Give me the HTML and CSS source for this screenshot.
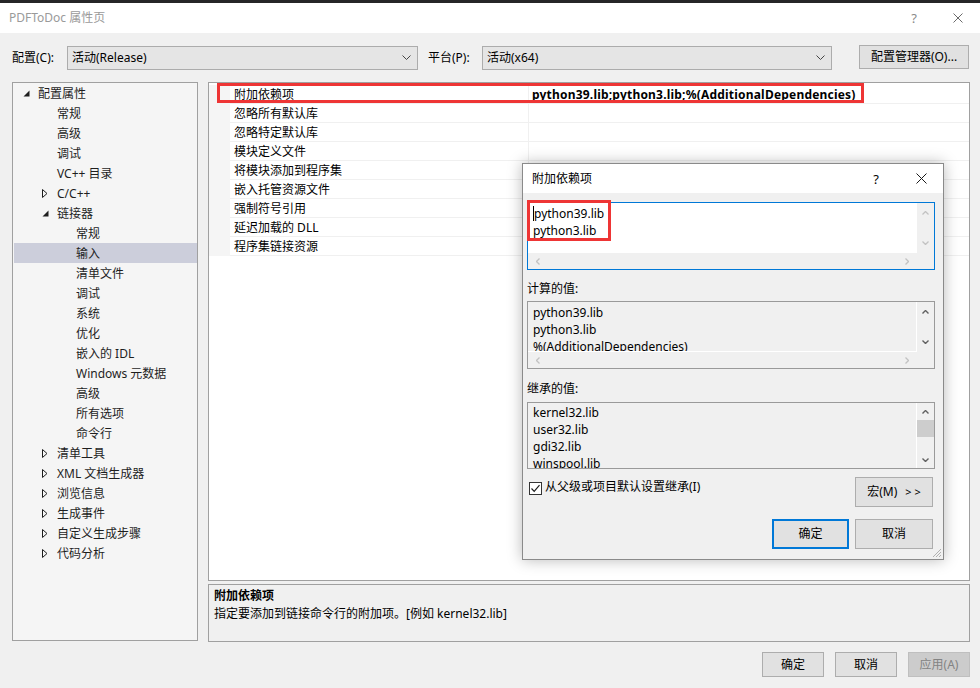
FILE: index.html
```html
<!DOCTYPE html>
<html lang="zh-CN">
<head>
<meta charset="utf-8">
<title>PDFToDoc 属性页</title>
<link rel="stylesheet" href="styles.css">
</head>
<body>
<div class="window">
  <div class="strip"></div>
  <div class="titlebar">
    <span class="title">PDFToDoc 属性页</span>
    <span class="tb-help">?</span>
    <span class="tb-close"><svg width="10" height="10" viewBox="0 0 10 10"><path d="M0.5 0.5 L9.5 9.5 M9.5 0.5 L0.5 9.5" stroke="#6a6a6a" stroke-width="1"/></svg></span>
  </div>

  <div class="toolbar">
    <span class="lbl">配置(C):</span>
    <div class="combo c1"><span>活动(Release)</span><svg width="9" height="5" viewBox="0 0 9 5"><path d="M0.5 0.5 L4.5 4.5 L8.5 0.5" fill="none" stroke="#444"/></svg></div>
    <span class="lbl lbl2">平台(P):</span>
    <div class="combo c2"><span>活动(x64)</span><svg width="9" height="5" viewBox="0 0 9 5"><path d="M0.5 0.5 L4.5 4.5 L8.5 0.5" fill="none" stroke="#444"/></svg></div>
    <button class="btn mgr">配置管理器(O)...</button>
  </div>

  <div class="main">
    <div class="tree">
      <div class="node l0"><span class="tw"><svg width="7" height="7" viewBox="0 0 7 7"><polygon points="6.5,0.5 6.5,6.5 0.5,6.5" fill="#1e1e1e"/></svg></span>配置属性</div>
      <div class="node l1"><span class="tw"></span>常规</div>
      <div class="node l1"><span class="tw"></span>高级</div>
      <div class="node l1"><span class="tw"></span>调试</div>
      <div class="node l1"><span class="tw"></span>VC++ 目录</div>
      <div class="node l1"><span class="tw"><svg width="6" height="9" viewBox="0 0 6 9"><polygon points="0.5,0.5 5,4.5 0.5,8.5" fill="none" stroke="#1e1e1e"/></svg></span>C/C++</div>
      <div class="node l1"><span class="tw"><svg width="7" height="7" viewBox="0 0 7 7"><polygon points="6.5,0.5 6.5,6.5 0.5,6.5" fill="#1e1e1e"/></svg></span>链接器</div>
      <div class="node l2"><span class="tw"></span>常规</div>
      <div class="node l2 sel"><span class="tw"></span>输入</div>
      <div class="node l2"><span class="tw"></span>清单文件</div>
      <div class="node l2"><span class="tw"></span>调试</div>
      <div class="node l2"><span class="tw"></span>系统</div>
      <div class="node l2"><span class="tw"></span>优化</div>
      <div class="node l2"><span class="tw"></span>嵌入的 IDL</div>
      <div class="node l2"><span class="tw"></span>Windows 元数据</div>
      <div class="node l2"><span class="tw"></span>高级</div>
      <div class="node l2"><span class="tw"></span>所有选项</div>
      <div class="node l2"><span class="tw"></span>命令行</div>
      <div class="node l1"><span class="tw"><svg width="6" height="9" viewBox="0 0 6 9"><polygon points="0.5,0.5 5,4.5 0.5,8.5" fill="none" stroke="#1e1e1e"/></svg></span>清单工具</div>
      <div class="node l1"><span class="tw"><svg width="6" height="9" viewBox="0 0 6 9"><polygon points="0.5,0.5 5,4.5 0.5,8.5" fill="none" stroke="#1e1e1e"/></svg></span>XML 文档生成器</div>
      <div class="node l1"><span class="tw"><svg width="6" height="9" viewBox="0 0 6 9"><polygon points="0.5,0.5 5,4.5 0.5,8.5" fill="none" stroke="#1e1e1e"/></svg></span>浏览信息</div>
      <div class="node l1"><span class="tw"><svg width="6" height="9" viewBox="0 0 6 9"><polygon points="0.5,0.5 5,4.5 0.5,8.5" fill="none" stroke="#1e1e1e"/></svg></span>生成事件</div>
      <div class="node l1"><span class="tw"><svg width="6" height="9" viewBox="0 0 6 9"><polygon points="0.5,0.5 5,4.5 0.5,8.5" fill="none" stroke="#1e1e1e"/></svg></span>自定义生成步骤</div>
      <div class="node l1"><span class="tw"><svg width="6" height="9" viewBox="0 0 6 9"><polygon points="0.5,0.5 5,4.5 0.5,8.5" fill="none" stroke="#1e1e1e"/></svg></span>代码分析</div>
    </div>

    <div class="right">
      <div class="grid">
        <div class="row"><div class="gut"></div><div class="name">附加依赖项</div><div class="val bold">python39.lib;python3.lib;%(AdditionalDependencies)</div></div>
        <div class="row"><div class="gut"></div><div class="name">忽略所有默认库</div><div class="val"></div></div>
        <div class="row"><div class="gut"></div><div class="name">忽略特定默认库</div><div class="val"></div></div>
        <div class="row"><div class="gut"></div><div class="name">模块定义文件</div><div class="val"></div></div>
        <div class="row"><div class="gut"></div><div class="name">将模块添加到程序集</div><div class="val"></div></div>
        <div class="row"><div class="gut"></div><div class="name">嵌入托管资源文件</div><div class="val"></div></div>
        <div class="row"><div class="gut"></div><div class="name">强制符号引用</div><div class="val"></div></div>
        <div class="row"><div class="gut"></div><div class="name">延迟加载的 DLL</div><div class="val"></div></div>
        <div class="row"><div class="gut"></div><div class="name">程序集链接资源</div><div class="val"></div></div>
        <div class="redmark"></div>
      </div>
      <div class="desc">
        <div class="desc-title">附加依赖项</div>
        <div>指定要添加到链接命令行的附加项。[例如 kernel32.lib]</div>
      </div>
    </div>
  </div>

  <div class="footer">
    <button class="btn fbtn">确定</button>
    <button class="btn fbtn">取消</button>
    <button class="btn fbtn disabled">应用(A)</button>
  </div>

  <div class="dialog">
    <div class="dlg-title">
      <span class="dlg-name">附加依赖项</span>
      <span class="dlg-help">?</span>
      <span class="dlg-close"><svg width="11" height="11" viewBox="0 0 11 11"><path d="M0.5 0.5 L10.5 10.5 M10.5 0.5 L0.5 10.5" stroke="#1a1a1a" stroke-width="1"/></svg></span>
    </div>
    <div class="dlg-body">
      <div class="lbox edit">
        <div class="ltext"><span class="caret"></span>python39.lib<br>python3.lib</div>
        <div class="vs">
          <span class="cell c20"><svg width="7" height="4" viewBox="0 0 7 4"><path d="M0.5 3.5 L3.5 0.5 L6.5 3.5" fill="none" stroke="#c2c2c2" stroke-width="1.3"/></svg></span>
          <span class="cell c20"><svg width="7" height="4" viewBox="0 0 7 4"><path d="M0.5 0.5 L3.5 3.5 L6.5 0.5" fill="none" stroke="#c2c2c2" stroke-width="1.3"/></svg></span>
        </div>
        <div class="hs">
          <span class="hcell"><svg width="4" height="7" viewBox="0 0 4 7"><path d="M3.5 0.5 L0.5 3.5 L3.5 6.5" fill="none" stroke="#c2c2c2" stroke-width="1.3"/></svg></span>
          <span class="hcell"><svg width="4" height="7" viewBox="0 0 4 7"><path d="M0.5 0.5 L3.5 3.5 L0.5 6.5" fill="none" stroke="#c2c2c2" stroke-width="1.3"/></svg></span>
        </div>
        <div class="corner"></div>
      </div>

      <div class="dlg-lbl lbl-a">计算的值:</div>
      <div class="lbox ro ro2">
        <div class="ltext">python39.lib<br>python3.lib<br>%(AdditionalDependencies)</div>
        <div class="vs">
          <span class="cell c20"><svg width="7" height="4" viewBox="0 0 7 4"><path d="M0.5 3.5 L3.5 0.5 L6.5 3.5" fill="none" stroke="#606060" stroke-width="1.4"/></svg></span>
          <span class="cell c20"><svg width="7" height="4" viewBox="0 0 7 4"><path d="M0.5 0.5 L3.5 3.5 L6.5 0.5" fill="none" stroke="#606060" stroke-width="1.4"/></svg></span>
        </div>
        <div class="hs">
          <span class="hcell"><svg width="4" height="7" viewBox="0 0 4 7"><path d="M3.5 0.5 L0.5 3.5 L3.5 6.5" fill="none" stroke="#c2c2c2" stroke-width="1.3"/></svg></span>
          <span class="hcell"><svg width="4" height="7" viewBox="0 0 4 7"><path d="M0.5 0.5 L3.5 3.5 L0.5 6.5" fill="none" stroke="#c2c2c2" stroke-width="1.3"/></svg></span>
        </div>
        <div class="corner"></div>
      </div>

      <div class="dlg-lbl lbl-b">继承的值:</div>
      <div class="lbox ro ro3">
        <div class="ltext">kernel32.lib<br>user32.lib<br>gdi32.lib<br>winspool.lib</div>
        <div class="vs vs3">
          <span class="cell c17"><svg width="7" height="4" viewBox="0 0 7 4"><path d="M0.5 3.5 L3.5 0.5 L6.5 3.5" fill="none" stroke="#606060" stroke-width="1.4"/></svg></span>
          <span class="thumb"></span>
          <span class="spacer"></span>
          <span class="cell c17"><svg width="7" height="4" viewBox="0 0 7 4"><path d="M0.5 0.5 L3.5 3.5 L6.5 0.5" fill="none" stroke="#606060" stroke-width="1.4"/></svg></span>
        </div>
      </div>

      <div class="chkrow">
        <span class="chk"><svg width="11" height="11" viewBox="0 0 11 11"><path d="M1.5 5.5 L4.2 8.3 L9.5 2.2" fill="none" stroke="#1a1a1a" stroke-width="1.2"/></svg></span>
        <span class="chklbl">从父级或项目默认设置继承(I)</span>
        <button class="btn dbtn macro">宏(M) <span class="gt">&gt;&gt;</span></button>
      </div>
      <div class="btnrow">
        <button class="btn dbtn primary">确定</button>
        <button class="btn dbtn">取消</button>
      </div>
    </div>
    <div class="redmark2"></div>
    <svg class="grip" width="10" height="10" viewBox="0 0 10 10"><path d="M9 1 L1 9 M9 4 L4 9 M9 7 L7 9" stroke="#b0b0b0" stroke-width="1"/></svg>
  </div>
</div>
</body>
</html>
```

FILE: styles.css
```css
* { box-sizing: border-box; }
html, body { margin: 0; padding: 0; }
body {
  width: 980px;
  height: 688px;
  overflow: hidden;
  background: #f0f0f0;
  font-family: "Noto Sans", "Noto Sans CJK SC", sans-serif;
  font-size: 12px;
  line-height: 16px;
  color: #000;
}
.window {
  position: relative;
  width: 980px;
  height: 688px;
  display: flex;
  flex-direction: column;
}
.strip { height: 3px; background: #262627; flex: none; }
.titlebar {
  height: 30px;
  background: #fff;
  display: flex;
  align-items: center;
  padding-left: 9px;
  flex: none;
}
.title { color: #9a9a9a; flex: 1; }
.tb-help { color: #8a8a8a; font-size: 13px; margin-right: 36px; }
.tb-close { width: 10px; height: 10px; display: flex; margin-right: 17px; }

.toolbar {
  height: 49px;
  display: flex;
  align-items: center;
  padding-left: 12px;
  flex: none;
}
.lbl { width: 55px; flex: none; }
.lbl2 { margin-left: 10px; width: 54px; }
.combo {
  height: 24px;
  background: #e5e5e5;
  border: 1px solid #acacac;
  display: flex;
  align-items: center;
  justify-content: space-between;
  padding: 0 6px 0 4px;
  flex: none;
}
.c1 { width: 351px; }
.c2 { width: 350px; }
.btn {
  font: inherit;
  line-height: 16px;
  background: #e1e1e1;
  border: 1px solid #adadad;
  color: #000;
  padding: 0;
  display: flex;
  align-items: center;
  justify-content: center;
  flex: none;
}
.mgr { margin-left: 27px; width: 110px; height: 24px; margin-top: -2px; }

.main {
  height: 560px;
  display: flex;
  gap: 10px;
  padding: 0 10px 0 12px;
  flex: none;
}
.tree {
  width: 186px;
  height: 559px;
  background: #f5f5f5;
  border: 1px solid #a0a0a0;
  padding-left: 1px;
  flex: none;
}
.node {
  height: 20px;
  padding-top: 1px;
  display: flex;
  align-items: center;
  color: #1e1e1e;
  white-space: nowrap;
}
.l0 { padding-left: 9px; }
.l1 { padding-left: 28px; }
.l2 { padding-left: 47px; }
.tw { width: 15px; display: flex; align-items: center; flex: none; margin-top: -1px; }
.sel { background: #cccedb; }

.right { width: 762px; display: flex; flex-direction: column; flex: none; }
.grid {
  position: relative;
  height: 499px;
  background: #fff;
  border: 1px solid #a0a0a0;
  padding-top: 2px;
  flex: none;
}
.row { height: 19px; display: flex; }
.gut { width: 21px; background: #f5f5f5; flex: none; }
.name {
  width: 298px;
  padding: 1px 0 0 4px;
  border-bottom: 1px solid #f0f0f0;
  line-height: 17px;
  flex: none;
  white-space: nowrap;
}
.val {
  flex: 1;
  border-left: 1px solid #f0f0f0;
  border-bottom: 1px solid #f0f0f0;
  padding: 1px 0 0 3px;
  line-height: 17px;
  white-space: nowrap;
}
.bold { font-weight: 700; letter-spacing: 0.2px; }
.redmark {
  position: absolute;
  left: 8px;
  top: 0;
  width: 647px;
  height: 20px;
  border: 3px solid #ee3535;
}
.desc {
  margin-top: 3px;
  height: 58px;
  border: 1px solid #a0a0a0;
  background: #f0f0f0;
  padding: 2px 5px 0;
  line-height: 18px;
  flex: none;
}
.desc-title { font-weight: 700; }

.footer {
  height: 46px;
  display: flex;
  justify-content: flex-end;
  gap: 11px;
  padding: 10px 10px 0 0;
  flex: none;
}
.fbtn { width: 62px; height: 25px; }
.disabled { background: #cccccc; border-color: #bfbfbf; color: #838383; }

/* floating dialog */
.dialog {
  position: absolute;
  left: 522px;
  top: 163px;
  width: 422px;
  height: 397px;
  border: 1px solid #8a8a8a;
  background: #f0f0f0;
  box-shadow: 0 0 14px rgba(0, 0, 0, 0.28);
}
.dlg-title {
  height: 29px;
  background: #fff;
  display: flex;
  align-items: center;
  padding-left: 9px;
}
.dlg-name { flex: 1; }
.dlg-help { font-size: 13px; margin-right: 37px; }
.dlg-close { width: 11px; height: 11px; display: flex; margin-right: 16px; }
.dlg-body { padding: 9px 8px 0 4px; }
.lbox {
  display: grid;
  grid-template-columns: 1fr 17px;
  width: 100%;
}
.edit {
  height: 68px;
  border: 1px solid #0078d7;
  grid-template-rows: 1fr 16px;
  background: #f0f0f0;
}
.ltext {
  padding: 2px 4px 0 5px;
  line-height: 17px;
  overflow: hidden;
  white-space: nowrap;
}
.edit .ltext { background: #fff; }
.caret {
  display: inline-block;
  width: 1px;
  height: 15px;
  background: #000;
  vertical-align: -3px;
}
.vs { display: flex; flex-direction: column; justify-content: space-between; }
.cell { width: 17px; display: flex; align-items: center; justify-content: center; }
.c20 { height: 20px; }
.c17 { height: 17px; }
.hs { display: flex; justify-content: space-between; align-items: center; }
.hcell { width: 20px; height: 16px; display: flex; align-items: center; justify-content: center; }
.corner { background: #f0f0f0; }
.ro { border: 1px solid #9a9a9a; background: #f0f0f0; }
.ro .ltext { border-right: 1px solid #fff; }
.ro2 { height: 68px; grid-template-rows: 1fr 16px; }
.ro2 .ltext { border-bottom: 1px solid #fff; }
.ro3 { height: 67px; }
.ro3 .ltext { padding-top: 1px; }
.vs3 { justify-content: flex-start; }
.thumb { width: 17px; height: 17px; background: #cdcdcd; }
.spacer { flex: 1; }
.dlg-lbl { height: 16px; }
.lbl-a { margin-top: 11px; margin-bottom: 4px; }
.lbl-b { margin-top: 12px; margin-bottom: 5px; }
.chkrow {
  margin-top: 8px;
  height: 30px;
  display: flex;
  align-items: flex-start;
  padding-right: 2px;
}
.chk {
  width: 13px;
  height: 13px;
  margin: 5px 0 0 2px;
  border: 1px solid #333;
  background: #fff;
  display: flex;
  align-items: center;
  justify-content: center;
}
.chklbl { margin: 2px 0 0 3px; flex: 1; }
.dbtn { width: 78px; height: 30px; }
.macro { gap: 8px; }
.gt { letter-spacing: 3px; font-size: 11px; margin-right: -3px; }
.btnrow {
  margin-top: 12px;
  display: flex;
  justify-content: flex-end;
  gap: 6px;
  padding-right: 2px;
}
.primary { border: 2px solid #0078d7; width: 77px; }
.redmark2 {
  position: absolute;
  left: 4px;
  top: 36px;
  width: 84px;
  height: 41px;
  border: 3px solid #ee3535;
}
.grip { position: absolute; right: 1px; bottom: 1px; }
```
